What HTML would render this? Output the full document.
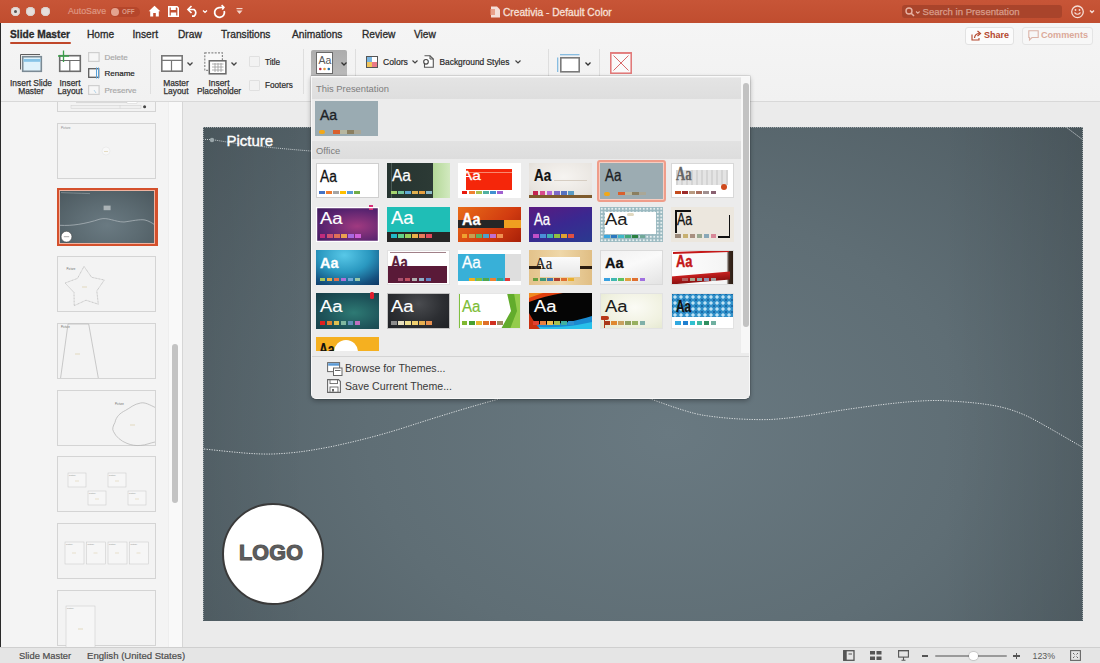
<!DOCTYPE html><html><head><meta charset="utf-8"><style>
*{margin:0;padding:0;box-sizing:border-box}
html,body{width:1100px;height:663px;overflow:hidden;background:#ebebeb;font-family:"Liberation Sans",sans-serif;position:relative}
.a{position:absolute}
.t{position:absolute;white-space:nowrap;line-height:1}
svg{position:absolute;overflow:visible}
#title{left:0;top:0;width:1100px;height:23px;background:linear-gradient(#c75537,#c04d2f)}
.tl{position:absolute;top:6.5px;width:9px;height:9px;border-radius:50%;background:#e6dfdc;box-shadow:inset 0 0 0 1px #d9cfcb}
#ribbon{left:0;top:23px;width:1100px;height:78px;background:linear-gradient(#f5f5f5,#f1f1f1)}
#ribline{left:0;top:101px;width:1100px;height:1px;background:#d8d8d8}
.tab{position:absolute;top:30.3px;font-size:10.2px;color:#2a2a2a;-webkit-text-stroke:0.3px #2a2a2a;line-height:1;white-space:nowrap}
.rl{position:absolute;font-size:8.4px;color:#333;-webkit-text-stroke:0.25px #333;line-height:8.7px;text-align:center;white-space:nowrap}
.sm{position:absolute;font-size:8px;color:#333;-webkit-text-stroke:0.2px currentColor;line-height:1;white-space:nowrap}
.sep{position:absolute;width:1px;background:#dedede}
#left{left:1px;top:102px;width:182px;height:545px;background:#f4f4f4}
.thumb{position:absolute;left:57px;width:99px;height:56px;background:#f3f3f3;border:1px solid #d4d4d4;overflow:hidden}
#slide{left:203px;top:127px;width:880px;height:494px;overflow:hidden;background:linear-gradient(90deg,rgba(0,0,0,.05) 0,rgba(0,0,0,0) 12%,rgba(0,0,0,0) 84%,rgba(0,0,0,.09) 100%),radial-gradient(ellipse 76% 100% at 53% 62%,#697981 0%,#5f6e75 45%,#4b585e 100%)}
#status{left:0;top:647px;width:1100px;height:16px;background:#e5e5e5;border-top:1px solid #cfcfcf}
#dd{left:311px;top:76px;width:439px;height:323px;background:#ececec;border:1.5px solid #f8f8f8;border-top:1px solid #fafafa;border-radius:0 0 5px 5px;box-shadow:0 0 0 0.5px rgba(0,0,0,.18),0 2px 5px rgba(0,0,0,.3);overflow:hidden}
.th{position:absolute;width:63px;height:35.7px;overflow:hidden}
.th>.bd{position:absolute;left:0;top:0;right:0;bottom:0;z-index:5}
.aa{position:absolute;font-size:15.5px;line-height:1;white-space:nowrap;transform:scaleX(.86);transform-origin:0 0;-webkit-text-stroke:0.3px currentColor}
.sw{position:absolute;height:3.5px;width:6px}
</style></head><body>
<div id="title" class="a">
<div class="tl" style="left:10.5px"></div>
<div class="tl" style="left:25.5px"></div>
<div class="tl" style="left:40.5px"></div>
<div class="a" style="left:13.5px;top:9.5px;width:3px;height:3px;border-radius:50%;background:#555"></div>
<div class="t" style="left:68px;top:6.8px;font-size:8.8px;color:#df9883;-webkit-text-stroke:0.2px #df9883">AutoSave</div>
<div class="a" style="left:110px;top:6.5px;width:30px;height:10px;border-radius:5px;background:#b5462b"></div>
<div class="a" style="left:111px;top:7.5px;width:8px;height:8px;border-radius:50%;background:#e3a38f"></div>
<div class="t" style="left:122px;top:8.5px;font-size:6.3px;font-weight:bold;color:#dc9a86">OFF</div>
<svg style="left:148px;top:5px" width="13" height="12" viewBox="0 0 13 12"><path d="M6.5 0.8 L12.3 6.2 L10.8 6.2 L10.8 11.5 L7.8 11.5 L7.8 8 L5.2 8 L5.2 11.5 L2.2 11.5 L2.2 6.2 L0.7 6.2 Z" fill="#fff"/></svg>
<svg style="left:168px;top:5.5px" width="11" height="11" viewBox="0 0 11 11"><path d="M0.8 0.8 H9 L10.2 2 V10.2 H0.8 Z" fill="none" stroke="#fff" stroke-width="1.6"/><rect x="2.8" y="1" width="5" height="3" fill="#fff"/><rect x="2.8" y="6.5" width="5.4" height="3.5" fill="#fff"/></svg>
<svg style="left:187px;top:5px" width="22" height="12" viewBox="0 0 22 12"><path d="M1.5 4.5 H7 A4 4 0 0 1 7 11.2 H5" fill="none" stroke="#fff" stroke-width="1.7"/><path d="M4.5 1 L1 4.5 L4.5 8" fill="none" stroke="#fff" stroke-width="1.7"/><path d="M16 5.5 L18 7.5 L20 5.5" fill="none" stroke="#fff" stroke-width="1.2"/></svg>
<svg style="left:213px;top:4.5px" width="14" height="13" viewBox="0 0 14 13"><path d="M11.2 6 A4.9 4.9 0 1 1 6 2.6" fill="none" stroke="#fff" stroke-width="1.8"/><path d="M5.8 2.6 L10.8 2.3 M8.6 0.2 L10.9 2.3 L9.3 4.6" fill="none" stroke="#fff" stroke-width="1.6"/></svg>
<svg style="left:236px;top:8px" width="7" height="7" viewBox="0 0 7 7"><rect x="0.5" y="0" width="6" height="1.2" fill="#f3d3c9"/><path d="M0.5 2.5 H6.5 L3.5 6 Z" fill="#f3d3c9"/></svg>
<svg style="left:489.5px;top:5.5px" width="11" height="12" viewBox="0 0 11 12"><path d="M1 0.5 H7 L10 3.5 V11.5 H1 Z" fill="#f4ded8"/><path d="M0.5 3 H5 V9 H0.5 Z" fill="#e8a08a"/></svg>
<div class="t" style="left:503px;top:8.1px;font-size:10.2px;color:#f7e0d9;-webkit-text-stroke:0.3px #f7e0d9">Creativia - Default Color</div>
<div class="a" style="left:902px;top:4.5px;width:159.5px;height:13.5px;border-radius:3px;background:#a9442b"></div>
<svg style="left:905px;top:6.5px" width="16" height="10" viewBox="0 0 16 10"><circle cx="4" cy="4" r="3" fill="none" stroke="#e7b2a3" stroke-width="1.4"/><path d="M6.2 6.2 L9 9" stroke="#e7b2a3" stroke-width="1.6"/><path d="M11 4.5 L12.8 6.3 L14.6 4.5" fill="none" stroke="#e7b2a3" stroke-width="1.1"/></svg>
<div class="t" style="left:922.5px;top:6.8px;font-size:9.6px;color:#d89d8b;-webkit-text-stroke:0.25px #d89d8b">Search in Presentation</div>
<svg style="left:1071px;top:4.5px" width="24" height="14" viewBox="0 0 24 14"><circle cx="6.5" cy="6.8" r="5.8" fill="none" stroke="#f5dcd4" stroke-width="1.3"/><circle cx="4.5" cy="5" r="0.9" fill="#f5dcd4"/><circle cx="8.5" cy="5" r="0.9" fill="#f5dcd4"/><path d="M3.5 7.5 Q6.5 11 9.5 7.5" fill="none" stroke="#f5dcd4" stroke-width="1.2"/><path d="M19 5.5 L21 7.5 L23 5.5" fill="none" stroke="#f5dcd4" stroke-width="1.4"/></svg>
</div>
<div id="ribbon" class="a"></div><div id="ribline" class="a"></div>
<div class="tab" style="left:10px;font-weight:bold;">Slide Master</div>
<div class="tab" style="left:87px;">Home</div>
<div class="tab" style="left:132.5px;">Insert</div>
<div class="tab" style="left:178px;">Draw</div>
<div class="tab" style="left:221px;">Transitions</div>
<div class="tab" style="left:292px;">Animations</div>
<div class="tab" style="left:362px;">Review</div>
<div class="tab" style="left:414px;">View</div>
<div class="a" style="left:9.5px;top:42px;width:61px;height:2.2px;background:#c0472a;border-radius:1px"></div>
<div class="a" style="left:965px;top:26.5px;width:48.5px;height:18px;background:#fbfbfb;border:1px solid #e2e2e2;border-radius:3px"></div>
<svg style="left:970.5px;top:30px" width="11" height="11" viewBox="0 0 11 11"><path d="M1 4.5 V10 H8 V8" fill="none" stroke="#b4472d" stroke-width="1.1"/><path d="M3.5 8 Q4 3.5 8.5 3.5" fill="none" stroke="#b4472d" stroke-width="1.2"/><path d="M6.5 1 L9.5 3.5 L6.5 6" fill="none" stroke="#b4472d" stroke-width="1.2"/></svg>
<div class="t" style="left:984px;top:31px;font-size:9px;font-weight:bold;color:#b4472d">Share</div>
<div class="a" style="left:1022px;top:26.5px;width:71px;height:18px;background:#f7f7f7;border:1px solid #e4e4e4;border-radius:3px"></div>
<svg style="left:1027.5px;top:30px" width="11" height="11" viewBox="0 0 11 11"><path d="M0.8 0.8 H10.2 V7.5 H4 L1.5 10 V7.5 H0.8 Z" fill="none" stroke="#dcb4a8" stroke-width="1.1"/></svg>
<div class="t" style="left:1041px;top:31px;font-size:9.1px;font-weight:bold;color:#dba999">Comments</div>
<svg style="left:20px;top:54px" width="23" height="19" viewBox="0 0 23 19"><path d="M0.5 15.5 V0.5 H20" fill="none" stroke="#5e5e5e" stroke-width="1"/><rect x="2.7" y="2.7" width="18.6" height="14.6" fill="#dff2fb" stroke="#7b8a94" stroke-width="1.6"/><rect x="3.5" y="5" width="17" height="2.8" fill="#86c3e6"/></svg>
<div class="rl" style="left:9.5px;top:78.5px;width:43px">Insert Slide<br>Master</div>
<svg style="left:57px;top:50px" width="25" height="23" viewBox="0 0 25 23"><rect x="2.7" y="5.7" width="20.6" height="15.6" fill="#fff" stroke="#6c6c6c" stroke-width="1.6"/><path d="M3 10.5 H23 M12.8 10.5 V21" stroke="#6c6c6c" stroke-width="1.2"/><path d="M6.5 0.5 V12 M1 6 H12" stroke="#3aa04a" stroke-width="1.3"/></svg>
<div class="rl" style="left:56px;top:78.5px;width:28px">Insert<br>Layout</div>
<svg style="left:88px;top:52px" width="12" height="10" viewBox="0 0 12 10"><rect x="0.6" y="0.6" width="10.5" height="8.8" fill="#f6f6f6" stroke="#cfcfcf" stroke-width="1.2"/></svg>
<div class="sm" style="left:104.5px;top:54.3px;color:#a8a8a8">Delete</div>
<svg style="left:88px;top:67px" width="13" height="12" viewBox="0 0 13 12"><rect x="0.7" y="1.7" width="10" height="8.6" fill="#f8f8f8" stroke="#5d5d5d" stroke-width="1.3"/><path d="M8.5 0.5 V11.5 M10.5 0.5 V11.5" stroke="#5aa0d6" stroke-width="1"/></svg>
<div class="sm" style="left:104.5px;top:70px;color:#222;font-size:8px">Rename</div>
<svg style="left:88px;top:85px" width="12" height="10" viewBox="0 0 12 10"><rect x="0.6" y="0.6" width="10.5" height="8.8" fill="#f6f6f6" stroke="#cfcfcf" stroke-width="1.2"/><path d="M6 5 L8 8" stroke="#b5d5ea" stroke-width="1"/></svg>
<div class="sm" style="left:104.5px;top:86.5px;color:#a8a8a8">Preserve</div>
<div class="sep" style="left:150px;top:49px;height:45px"></div>
<svg style="left:161px;top:55px" width="22" height="17" viewBox="0 0 22 17"><rect x="0.8" y="0.8" width="20.4" height="15.4" fill="#fff" stroke="#777" stroke-width="1.6"/><path d="M1 5.3 H21 M10.5 5.3 V16" stroke="#777" stroke-width="1.2"/></svg>
<svg style="left:187px;top:62px" width="6" height="4" viewBox="0 0 6 4"><path d="M0.5 0.5 L3 3 L5.5 0.5" fill="none" stroke="#444" stroke-width="1.3"/></svg>
<div class="rl" style="left:158px;top:78.5px;width:36px">Master<br>Layout</div>
<svg style="left:204px;top:52px" width="23" height="23" viewBox="0 0 23 23"><rect x="0.8" y="0.8" width="17.6" height="17.6" fill="#f8f8f8" stroke="#8a8a8a" stroke-width="1.2" stroke-dasharray="2 1.3"/><rect x="5.3" y="8.8" width="16.6" height="13" fill="#fff" stroke="#666" stroke-width="1.5"/><path d="M8 12 H19.5 M8 15 H19.5 M8 18 H19.5 M11 11 V20 M14 11 V20 M17 11 V20" stroke="#999" stroke-width="0.8"/></svg>
<svg style="left:231px;top:62px" width="6" height="4" viewBox="0 0 6 4"><path d="M0.5 0.5 L3 3 L5.5 0.5" fill="none" stroke="#444" stroke-width="1.3"/></svg>
<div class="rl" style="left:195px;top:78.5px;width:48px">Insert<br>Placeholder</div>
<div class="a" style="left:249px;top:56px;width:10.5px;height:10.5px;border:1px solid #e0e0e0;background:#f2f2f2;border-radius:1px"></div>
<div class="sm" style="left:265px;top:59px;color:#2a2a2a;font-size:8.2px">Title</div>
<div class="a" style="left:249px;top:80px;width:10.5px;height:10.5px;border:1px solid #e0e0e0;background:#f2f2f2;border-radius:1px"></div>
<div class="sm" style="left:265px;top:82.2px;color:#2a2a2a;font-size:8.2px">Footers</div>
<div class="sep" style="left:303px;top:49px;height:45px"></div>
<div class="a" style="left:311px;top:50px;width:35.5px;height:26px;background:linear-gradient(#acacac,#bababa);border-radius:2px 2px 0 0"></div>
<svg style="left:316px;top:52px" width="17" height="22" viewBox="0 0 17 22"><rect x="0.5" y="0.5" width="16" height="21" fill="#fff" stroke="#6a6a6a" stroke-width="1"/><text x="2.6" y="12.3" font-family="Liberation Sans" font-size="10.5" fill="#555">Aa</text><circle cx="4.3" cy="17" r="1.3" fill="#c0283c"/><circle cx="8.5" cy="17" r="1.3" fill="#e19a3a"/><circle cx="12.8" cy="17" r="1.3" fill="#1f6fa8"/></svg>
<svg style="left:340.5px;top:62px" width="6" height="4" viewBox="0 0 6 4"><path d="M0.5 0.5 L3 3 L5.5 0.5" fill="none" stroke="#333" stroke-width="1.3"/></svg>
<div class="sep" style="left:355px;top:49px;height:45px"></div>
<svg style="left:366px;top:55.5px" width="12" height="12" viewBox="0 0 12 12"><rect x="0.5" y="0.5" width="5.5" height="5.5" fill="#79b5e1"/><rect x="6" y="0.5" width="5.5" height="5.5" fill="#fff"/><rect x="0.5" y="6" width="5.5" height="5.5" fill="#f1c55a"/><rect x="6" y="6" width="5.5" height="5.5" fill="#ea7a88"/><rect x="0.5" y="0.5" width="11" height="11" fill="none" stroke="#555" stroke-width="1"/></svg>
<div class="sm" style="left:383px;top:57.5px;color:#2a2a2a;font-size:8.6px">Colors</div>
<svg style="left:411.5px;top:60px" width="6" height="4" viewBox="0 0 6 4"><path d="M0.5 0.5 L3 3 L5.5 0.5" fill="none" stroke="#444" stroke-width="1.2"/></svg>
<svg style="left:423px;top:55px" width="12" height="13" viewBox="0 0 12 13"><path d="M1.5 0.8 H7 L10.3 4 V12.2 H1.5 V9" fill="#fdfdfd" stroke="#555" stroke-width="1.1"/><path d="M7 0.8 V4 H10.3" fill="none" stroke="#555" stroke-width="1"/><circle cx="3" cy="6.8" r="2.3" fill="#fff" stroke="#444" stroke-width="1.1"/></svg>
<div class="sm" style="left:439.5px;top:57.5px;color:#2a2a2a;font-size:8.4px">Background Styles</div>
<svg style="left:514.5px;top:60px" width="6" height="4" viewBox="0 0 6 4"><path d="M0.5 0.5 L3 3 L5.5 0.5" fill="none" stroke="#444" stroke-width="1.2"/></svg>
<div class="sep" style="left:548px;top:49px;height:45px"></div>
<svg style="left:557px;top:53.5px" width="24" height="19" viewBox="0 0 24 19"><path d="M3 0.7 H22.5" stroke="#7db7df" stroke-width="1.2"/><path d="M0.7 3.5 V18" stroke="#7db7df" stroke-width="1.2"/><rect x="3.8" y="3.8" width="18.4" height="14" fill="#fff" stroke="#7a7a7a" stroke-width="1.6"/></svg>
<svg style="left:584.5px;top:62px" width="6" height="4" viewBox="0 0 6 4"><path d="M0.5 0.5 L3 3 L5.5 0.5" fill="none" stroke="#333" stroke-width="1.3"/></svg>
<div class="sep" style="left:598.5px;top:49px;height:45px"></div>
<svg style="left:610px;top:52px" width="22" height="22" viewBox="0 0 22 22"><rect x="0.8" y="0.8" width="20.4" height="20.4" fill="#fafafa" stroke="#e07474" stroke-width="1.5"/><path d="M1 1.2 H21" stroke="#e48080" stroke-width="1.5"/><path d="M3.5 3.5 L18.5 18.5 M18.5 3.5 L3.5 18.5" stroke="#d86a6a" stroke-width="1"/></svg>
<div id="left" class="a"></div>
<div class="a" style="left:0;top:23px;width:1px;height:624px;background:#2a2a2a"></div>
<div class="a" style="left:168px;top:102px;width:14px;height:545px;background:#f9f9f9;border-left:1px solid #eeeeee"></div>
<div class="a" style="left:182px;top:102px;width:1px;height:545px;background:#d6d6d6"></div>
<div class="a" style="left:171.5px;top:343.5px;width:6px;height:159px;background:#c3c3c3;border-radius:3px"></div>
<div class="a" style="left:0;top:102px;width:168px;height:545px;overflow:hidden"><div class="a" style="left:0;top:-102px;width:168px;height:700px">
<div class="thumb" style="top:56.1px"></div>
<div class="thumb" style="top:122.8px"></div>
<div class="a" style="left:56.6px;top:187.7px;width:101px;height:58.5px;background:#d4502c"></div>
<div class="a" style="left:59.2px;top:190.2px;width:95.8px;height:53.5px;background:#efb3a0"></div>
<div class="a" style="left:60.2px;top:190.9px;width:93.8px;height:52px;background:radial-gradient(ellipse 75% 90% at 50% 66%,#6a7a82,#5d6c73 45%,#4b585e)"></div>
<svg style="left:60.2px;top:190.9px" width="94" height="52" viewBox="0 0 94 52"><path d="M1 1.6 Q12 2 30 2.6" fill="none" stroke="#9aa6ab" stroke-width="0.6"/><path d="M0 34.3 C12 35 25 33 40 28.1 C48 26 55 31 64 31 C72 30 80 28 85 29 C89 30 92 32 94 33.3" fill="none" stroke="#a9b3b7" stroke-width="0.8"/><rect x="43.6" y="14.6" width="7" height="4.6" fill="#aab2b5"/><circle cx="6.5" cy="45.7" r="5.4" fill="#fff" stroke="#3a3a3a" stroke-width="0.5"/><rect x="3.8" y="45.2" width="5.4" height="1" fill="#aaa"/></svg>
<div class="thumb" style="top:256.2px"></div>
<div class="thumb" style="top:322.9px"></div>
<div class="thumb" style="top:389.6px"></div>
<div class="thumb" style="top:456.3px"></div>
<div class="thumb" style="top:523.0px"></div>
<div class="thumb" style="top:589.7px"></div>
<svg style="left:58px;top:57.1px" width="97" height="54" viewBox="0 0 97 54"><path d="M18 45.6 H79" stroke="#c4c4c4" stroke-width="0.6"/><rect x="69" y="44.6" width="10" height="2" fill="#fff" stroke="#c8c8c8" stroke-width="0.4"/><rect x="13" y="48.3" width="70" height="3" fill="#f0f0f0" stroke="#cdcdcd" stroke-width="0.5"/><path d="M62 48.3 V51.3" stroke="#cdcdcd" stroke-width="0.5"/><circle cx="86.6" cy="49.8" r="1.5" fill="#444"/></svg>
<svg style="left:58px;top:123.8px" width="97" height="54" viewBox="0 0 97 54"><text x="3" y="5" font-size="3" fill="#888" font-family="Liberation Sans">Picture</text><circle cx="48" cy="27" r="4" fill="#f8f8f8" stroke="#ddd" stroke-width="0.4"/><path d="M46 27.5 H50" stroke="#d9c9a0" stroke-width="0.6"/></svg>
<svg style="left:58px;top:257.2px" width="97" height="54" viewBox="0 0 97 54"><text x="8.6" y="13" font-size="2.8" fill="#666" font-family="Liberation Sans">Picture</text><path d="M26.0 9.4 L33.6 20.3 L46.3 23.0 L38.8 33.9 L40.3 47.2 L28.0 43.2 L16.2 48.7 L16.0 35.5 L7.1 26.0 L19.5 21.4 Z" fill="none" stroke="#b0b0b0" stroke-width="0.7" stroke-dasharray="1 0.5"/><path d="M24 30 H29" stroke="#d9c9a0" stroke-width="0.6"/></svg>
<svg style="left:58px;top:323.9px" width="97" height="54" viewBox="0 0 97 54"><text x="3" y="4" font-size="2.8" fill="#666" font-family="Liberation Sans">Picture</text><path d="M10 0 H30.7 M10 0 L2.6 54 M30.7 0 L40.3 54" fill="none" stroke="#b4b4b4" stroke-width="0.7"/><path d="M17 30 H22" stroke="#d9c9a0" stroke-width="0.6"/></svg>
<svg style="left:58px;top:390.6px" width="97" height="54" viewBox="0 0 97 54"><text x="57" y="14" font-size="2.8" fill="#666" font-family="Liberation Sans">Picture</text><path d="M97 16.4 C92 14 87 11 82.6 12 C76 13 72 17 67.5 19.4 C62 22 58 26 57 31.4 C55 35 54 38 55.4 40.4 C58 46 63 50 69 52.4 C73 54 78 55 82.6 54.4 C88 54 92 52 97 51" fill="none" stroke="#b0b0b0" stroke-width="0.7"/><path d="M72 34 H77" stroke="#d9c9a0" stroke-width="0.6"/></svg>
<svg style="left:58px;top:457.3px" width="97" height="54" viewBox="0 0 97 54"><rect x="10" y="16" width="18" height="14" fill="#f6f6f6" stroke="#c6c6c6" stroke-width="0.5"/><text x="11" y="18.5" font-size="2.2" fill="#888" font-family="Liberation Sans">Picture</text><path d="M17 24 H21" stroke="#d9c9a0" stroke-width="0.5"/><rect x="50" y="16" width="18" height="14" fill="#f6f6f6" stroke="#c6c6c6" stroke-width="0.5"/><text x="51" y="18.5" font-size="2.2" fill="#888" font-family="Liberation Sans">Picture</text><path d="M57 24 H61" stroke="#d9c9a0" stroke-width="0.5"/><rect x="30" y="34" width="18" height="14" fill="#f6f6f6" stroke="#c6c6c6" stroke-width="0.5"/><text x="31" y="36.5" font-size="2.2" fill="#888" font-family="Liberation Sans">Picture</text><path d="M37 42 H41" stroke="#d9c9a0" stroke-width="0.5"/><rect x="70" y="34" width="18" height="14" fill="#f6f6f6" stroke="#c6c6c6" stroke-width="0.5"/><text x="71" y="36.5" font-size="2.2" fill="#888" font-family="Liberation Sans">Picture</text><path d="M77 42 H81" stroke="#d9c9a0" stroke-width="0.5"/></svg>
<svg style="left:58px;top:524.0px" width="97" height="54" viewBox="0 0 97 54"><rect x="7" y="18" width="19" height="22" fill="#f6f6f6" stroke="#c6c6c6" stroke-width="0.5"/><text x="8" y="20.5" font-size="2.2" fill="#888" font-family="Liberation Sans">Picture</text><path d="M14 29 H18" stroke="#d9c9a0" stroke-width="0.5"/><rect x="28.5" y="18" width="19" height="22" fill="#f6f6f6" stroke="#c6c6c6" stroke-width="0.5"/><text x="29.5" y="20.5" font-size="2.2" fill="#888" font-family="Liberation Sans">Picture</text><path d="M35.5 29 H39.5" stroke="#d9c9a0" stroke-width="0.5"/><rect x="50" y="18" width="19" height="22" fill="#f6f6f6" stroke="#c6c6c6" stroke-width="0.5"/><text x="51" y="20.5" font-size="2.2" fill="#888" font-family="Liberation Sans">Picture</text><path d="M57 29 H61" stroke="#d9c9a0" stroke-width="0.5"/><rect x="71.5" y="18" width="19" height="22" fill="#f6f6f6" stroke="#c6c6c6" stroke-width="0.5"/><text x="72.5" y="20.5" font-size="2.2" fill="#888" font-family="Liberation Sans">Picture</text><path d="M78.5 29 H82.5" stroke="#d9c9a0" stroke-width="0.5"/></svg>
<svg style="left:58px;top:590.7px" width="97" height="54" viewBox="0 0 97 54"><rect x="8" y="15" width="29" height="50" fill="#f6f6f6" stroke="#c6c6c6" stroke-width="0.5"/><text x="9" y="18" font-size="2.2" fill="#888" font-family="Liberation Sans">Picture</text><path d="M20 38 H25" stroke="#d9c9a0" stroke-width="0.6"/></svg>
</div></div>
<div id="slide" class="a">
<svg style="left:0;top:0" width="880" height="494" viewBox="0 0 880 494"><path d="M0 12.4 L9 12.6 C30 16 50 19.5 108 24 L130 25.5" fill="none" stroke="#d0d6d8" stroke-width="0.9" stroke-dasharray="1 1"/><circle cx="9" cy="13" r="2.2" fill="#9aa6aa"/><path d="M1 322 C30 325 50 327.5 70 327 C95 326 110 323 128 319.7 C150 315 175 309 200.6 300.8 C240 288 270 279 297 271.7 C340 258 400 255 450 272.8 C470 280 490 287 502 288.5 C525 292 550 293 568 292.5 C590 291 610 288 633 284 C680 277 720 272 745 273.9 C765 275 780 276.5 793 279 C810 282.2 825 289 835 294.8 C850 303 865 312 879 320" fill="none" stroke="#d5dadc" stroke-width="1" stroke-dasharray="1.3 1.2"/><path d="M863.6 0.5 L879.6 12.6" fill="none" stroke="#d5dadc" stroke-width="1" stroke-dasharray="1.3 1.2"/><path d="M0.5 0 V494 M0 0.5 H880 M879.5 0 V494" fill="none" stroke="#aeb6b9" stroke-width="0.8" stroke-dasharray="1 1"/></svg>
<div class="t" style="left:23.5px;top:6px;font-size:15px;color:#fff;-webkit-text-stroke:0.35px #fff">Picture</div>
<div class="a" style="left:18.5px;top:375.5px;width:102px;height:102px;border-radius:50%;background:#fff;border:2px solid #3a3a3a"></div>
<div class="t" style="left:36px;top:416px;font-size:21.5px;font-weight:bold;color:#5e5e5e;-webkit-text-stroke:1.1px #555;letter-spacing:0.2px">LOGO</div>
</div>
<div id="status" class="a">
<div class="t" style="left:19px;top:3px;font-size:9.4px;color:#4d4d4d;-webkit-text-stroke:0.2px #4d4d4d">Slide Master</div>
<div class="t" style="left:87px;top:3px;font-size:9.6px;color:#4d4d4d;-webkit-text-stroke:0.2px #4d4d4d">English (United States)</div>
</div>
<svg style="left:843px;top:650px" width="12" height="11" viewBox="0 0 12 11"><rect x="0.7" y="0.7" width="10.3" height="9.6" fill="none" stroke="#555" stroke-width="1.3"/><rect x="0.7" y="0.7" width="3" height="9.6" fill="#555"/><path d="M5.5 4 H9" stroke="#555" stroke-width="1"/></svg>
<svg style="left:870px;top:651px" width="12" height="10" viewBox="0 0 12 10"><rect x="0" y="0" width="5" height="3.5" fill="#555"/><rect x="6.5" y="0" width="5" height="3.5" fill="#555"/><rect x="0" y="5.5" width="5" height="3.5" fill="#555"/><rect x="6.5" y="5.5" width="5" height="3.5" fill="#555"/></svg>
<svg style="left:897.5px;top:650px" width="11" height="11" viewBox="0 0 11 11"><rect x="0.6" y="0.6" width="9.8" height="6.5" fill="none" stroke="#555" stroke-width="1.1"/><path d="M0 0.6 H11 M5.5 7 V10 M3.5 10.3 H7.5" stroke="#555" stroke-width="1.1"/></svg>
<div class="a" style="left:922px;top:655px;width:6px;height:1.5px;background:#555"></div>
<div class="a" style="left:934.5px;top:654.5px;width:72.5px;height:2.5px;background:#9a9a9a;border-radius:1px"></div>
<div class="a" style="left:969px;top:651.5px;width:8.5px;height:8.5px;border-radius:50%;background:#fff;box-shadow:0 0 1px 0.5px rgba(0,0,0,.25)"></div>
<div class="a" style="left:1013px;top:655px;width:6.5px;height:1.5px;background:#555"></div><div class="a" style="left:1015.5px;top:652.5px;width:1.5px;height:6.5px;background:#555"></div>
<div class="t" style="left:1032.5px;top:651.5px;font-size:8.8px;color:#5a5a5a">123%</div>
<svg style="left:1070px;top:650px" width="11" height="11" viewBox="0 0 11 11"><rect x="0.6" y="0.6" width="9.8" height="9.8" fill="none" stroke="#666" stroke-width="1.1"/><path d="M3 3 L4.5 4.5 M8 3 L6.5 4.5 M3 8 L4.5 6.5 M8 8 L6.5 6.5" stroke="#666" stroke-width="1"/></svg>
<div id="dd" class="a">
<div class="a" style="left:0;top:1px;width:429px;height:21px;background:linear-gradient(#e4e4e4,#dedede)"></div>
<div class="t" style="left:4px;top:7px;font-size:9.4px;color:#7d7d7d">This Presentation</div>
<div class="a" style="left:0;top:64px;width:429px;height:18px;background:linear-gradient(#e2e2e2,#dddddd)"></div>
<div class="t" style="left:4px;top:68.8px;font-size:9.4px;color:#7d7d7d">Office</div>
<div class="a" style="left:429px;top:0;width:9px;height:276px;background:#f7f7f7"></div>
<div class="a" style="left:430.5px;top:6px;width:6px;height:244px;background:#c2c2c2;border-radius:3px"></div>
<div class="a" style="left:0;top:279px;width:438px;height:1px;background:#d4d4d4"></div>
<svg style="left:15px;top:285px" width="16" height="14" viewBox="0 0 16 14"><rect x="0.6" y="0.6" width="12" height="9" fill="#fff" stroke="#666" stroke-width="1"/><rect x="1.2" y="1.2" width="10.8" height="2.5" fill="#5a9ad6"/><rect x="6.5" y="6" width="8.5" height="7.5" fill="#fff" stroke="#666" stroke-width="1"/><path d="M8 8.5 H13.5" stroke="#666" stroke-width="1"/></svg>
<div class="t" style="left:33px;top:286px;font-size:10.6px;color:#3a3a3a">Browse for Themes...</div>
<svg style="left:15px;top:302px" width="15" height="14" viewBox="0 0 15 14"><path d="M0.6 0.6 H11.5 L13.4 2.5 V13.4 H0.6 Z" fill="#fff" stroke="#666" stroke-width="1.1"/><rect x="3" y="0.6" width="7.5" height="4" fill="none" stroke="#666" stroke-width="0.9"/><rect x="3" y="8" width="8" height="5.4" fill="none" stroke="#666" stroke-width="0.9"/><rect x="5" y="10" width="2" height="2.5" fill="#666"/></svg>
<div class="t" style="left:33px;top:304px;font-size:10.6px;color:#3a3a3a">Save Current Theme...</div>
</div>
<div class="th" style="left:315px;top:101px;width:63.4px;height:35.4px;background:#9aabb2;"><div class="aa" style="left:5.00px;top:6.51px;color:#1d2226;font-size:14.29px;transform:scaleX(0.984);font-family:'Liberation Sans',sans-serif;font-weight:normal;-webkit-text-stroke:0.35px #1d2226;">Aa</div><div class="a" style="left:4.3px;top:28.8px;width:6px;height:4.2px;border-radius:2px;background:#f2a818"></div><div class="sw" style="left:18.00px;top:29.2px;width:6.5px;height:3.4px;background:#d9602d"></div><div class="sw" style="left:25.00px;top:29.2px;width:6.5px;height:3.4px;background:#b7b7a0"></div><div class="sw" style="left:32.00px;top:29.2px;width:6.5px;height:3.4px;background:#8b7f60"></div><div class="sw" style="left:39.00px;top:29.2px;width:6.5px;height:3.4px;background:#a9a797"></div></div>
<div class="a" style="left:596.5px;top:159.5px;width:69.5px;height:42px;border:2px solid #ef9d8a;background:#f6cdc1;border-radius:3px"></div>
<div class="th" style="left:315.7px;top:162.7px;width:63px;height:35.6px;background:#fff;"><div class="aa" style="left:4.50px;top:5.82px;color:#111;font-size:15.57px;transform:scaleX(0.886);font-family:'Liberation Sans',sans-serif;font-weight:normal;-webkit-text-stroke:0.3px #111;">Aa</div><div class="sw" style="left:3.50px;top:28.3px;width:5.6px;height:3.4px;background:#4472c4"></div><div class="sw" style="left:10.55px;top:28.3px;width:5.6px;height:3.4px;background:#ed7d31"></div><div class="sw" style="left:17.60px;top:28.3px;width:5.6px;height:3.4px;background:#a5a5a5"></div><div class="sw" style="left:24.65px;top:28.3px;width:5.6px;height:3.4px;background:#ffc000"></div><div class="sw" style="left:31.70px;top:28.3px;width:5.6px;height:3.4px;background:#5b9bd5"></div><div class="sw" style="left:38.75px;top:28.3px;width:5.6px;height:3.4px;background:#70ad47"></div><div class="bd" style="box-shadow:inset 0 0 0 1px #cfcfcf"></div></div>
<div class="th" style="left:386.6px;top:162.7px;width:63px;height:35.6px;background:linear-gradient(90deg,#263430 0,#2c3a35 73%,#b4d898 73%,#d2e9bf 100%);"><div class="a" style="left:4px;top:0;width:0.8px;height:36px;background:#4a5a54"></div><div class="aa" style="left:5.30px;top:4.39px;color:#fff;font-size:16.43px;transform:scaleX(0.944);font-family:'Liberation Sans',sans-serif;font-weight:normal;-webkit-text-stroke:0.25px #fff;">Aa</div><div class="sw" style="left:4.40px;top:28.3px;width:5.6px;height:3.4px;background:#a5d36e"></div><div class="sw" style="left:11.45px;top:28.3px;width:5.6px;height:3.4px;background:#72c49a"></div><div class="sw" style="left:18.50px;top:28.3px;width:5.6px;height:3.4px;background:#5fa8d3"></div><div class="sw" style="left:25.55px;top:28.3px;width:5.6px;height:3.4px;background:#e0b050"></div><div class="sw" style="left:32.60px;top:28.3px;width:5.6px;height:3.4px;background:#e8a040"></div><div class="sw" style="left:39.65px;top:28.3px;width:5.6px;height:3.4px;background:#8ab8c8"></div></div>
<div class="th" style="left:457.9px;top:162.7px;width:63px;height:35.6px;background:#fff;"><div class="a" style="left:8.1px;top:6.2px;width:45.9px;height:21.4px;background:#f5260a"></div><div class="a" style="left:8.1px;top:9.8px;width:45.9px;height:1px;background:#f9886f"></div><div class="aa" style="left:4.10px;top:7.42px;color:#fff;font-size:12.86px;transform:scaleX(1.192);font-family:'Liberation Sans',sans-serif;font-weight:normal;-webkit-text-stroke:0.3px #fff;">Aa</div><div class="sw" style="left:4.00px;top:28.3px;width:5.6px;height:3.4px;background:#e8180c"></div><div class="sw" style="left:11.05px;top:28.3px;width:5.6px;height:3.4px;background:#f08030"></div><div class="sw" style="left:18.10px;top:28.3px;width:5.6px;height:3.4px;background:#a8c050"></div><div class="sw" style="left:25.15px;top:28.3px;width:5.6px;height:3.4px;background:#50b0a0"></div><div class="sw" style="left:32.20px;top:28.3px;width:5.6px;height:3.4px;background:#4090d0"></div><div class="sw" style="left:39.25px;top:28.3px;width:5.6px;height:3.4px;background:#a060d0"></div></div>
<div class="th" style="left:528.6px;top:162.7px;width:63px;height:35.6px;background:radial-gradient(ellipse at 55% 40%,#f6f4f1,#e9e5e0 70%,#dcd7d0);"><div class="a" style="left:25px;top:17.8px;width:33px;height:0.8px;background:#d6cdc2"></div><div class="aa" style="left:5.30px;top:4.59px;color:#111;font-size:16.43px;transform:scaleX(0.819);font-family:'Liberation Sans',sans-serif;font-weight:bold;-webkit-text-stroke:0.2px #111;">Aa</div><div class="sw" style="left:4.20px;top:28.6px;width:5.6px;height:3.4px;background:#c4224f"></div><div class="sw" style="left:11.25px;top:28.6px;width:5.6px;height:3.4px;background:#d84b8e"></div><div class="sw" style="left:18.30px;top:28.6px;width:5.6px;height:3.4px;background:#b56ad8"></div><div class="sw" style="left:25.35px;top:28.6px;width:5.6px;height:3.4px;background:#7d6bc9"></div><div class="sw" style="left:32.40px;top:28.6px;width:5.6px;height:3.4px;background:#5773c0"></div><div class="sw" style="left:39.45px;top:28.6px;width:5.6px;height:3.4px;background:#5a9cc4"></div><div class="a" style="left:0;top:32.2px;width:63px;height:3.4px;background:#7e5a2c"></div></div>
<div class="th" style="left:599.8px;top:163px;width:63px;height:35.5px;background:#9cacb2;"><div class="aa" style="left:5.70px;top:5.08px;color:#1d2226;font-size:15.86px;transform:scaleX(0.843);font-family:'Liberation Sans',sans-serif;font-weight:normal;-webkit-text-stroke:0.35px #1d2226;">Aa</div><div class="a" style="left:4.5px;top:28.6px;width:6px;height:4.2px;border-radius:2px;background:#f2a818"></div><div class="sw" style="left:18.50px;top:28.6px;width:6.5px;height:3.4px;background:#d9602d"></div><div class="sw" style="left:25.50px;top:28.6px;width:6.5px;height:3.4px;background:#b7b7a0"></div><div class="sw" style="left:32.50px;top:28.6px;width:6.5px;height:3.4px;background:#8b7f60"></div><div class="sw" style="left:39.50px;top:28.6px;width:6.5px;height:3.4px;background:#a9a797"></div></div>
<div class="th" style="left:671.1px;top:162.7px;width:63px;height:35.6px;background:#fff;"><div class="a" style="left:5px;top:7px;width:52.4px;height:15.3px;background:repeating-linear-gradient(90deg,#d4d4d4 0 2px,#e4e4e4 2px 5px)"></div><div class="aa" style="left:4.90px;top:3.68px;color:#666;font-size:17.86px;transform:scaleX(0.716);font-family:'Liberation Serif',serif;font-weight:bold;-webkit-text-stroke:0.3px #666;">Aa</div><div class="a" style="left:49.9px;top:21.2px;width:6px;height:6px;border-radius:50%;background:#cf4a1e"></div><div class="sw" style="left:4.20px;top:28.3px;width:5.6px;height:3.4px;background:#c44c1e"></div><div class="sw" style="left:11.25px;top:28.3px;width:5.6px;height:3.4px;background:#9c2a2a"></div><div class="sw" style="left:18.30px;top:28.3px;width:5.6px;height:3.4px;background:#b89a80"></div><div class="sw" style="left:25.35px;top:28.3px;width:5.6px;height:3.4px;background:#a87060"></div><div class="sw" style="left:32.40px;top:28.3px;width:5.6px;height:3.4px;background:#a09090"></div><div class="sw" style="left:39.45px;top:28.3px;width:5.6px;height:3.4px;background:#8a6070"></div><div class="bd" style="box-shadow:inset 0 0 0 1px #d8d8d8"></div></div>
<div class="th" style="left:315.7px;top:206.6px;width:63px;height:35.6px;background:radial-gradient(ellipse at 65% 55%,#a03a80,#5a2470 60%,#3a1a5a);"><div class="bd" style="box-shadow:inset 0 0 0 1.2px #fff"></div><div class="aa" style="left:4.60px;top:3.67px;color:#fff;font-size:17.29px;transform:scaleX(1.064);font-family:'Liberation Sans',sans-serif;font-weight:normal;-webkit-text-stroke:0.15px #fff;">Aa</div><div class="sw" style="left:4.20px;top:27.9px;width:5.6px;height:3.4px;background:#c02c7c"></div><div class="sw" style="left:11.25px;top:27.9px;width:5.6px;height:3.4px;background:#d05070"></div><div class="sw" style="left:18.30px;top:27.9px;width:5.6px;height:3.4px;background:#e07058"></div><div class="sw" style="left:25.35px;top:27.9px;width:5.6px;height:3.4px;background:#eaa050"></div><div class="sw" style="left:32.40px;top:27.9px;width:5.6px;height:3.4px;background:#a868e0"></div><div class="sw" style="left:39.45px;top:27.9px;width:5.6px;height:3.4px;background:#d060d8"></div></div>
<div class="a" style="left:369.3px;top:204.5px;width:4.2px;height:5.5px;background:#d8307a"></div>
<div class="th" style="left:386.6px;top:206.6px;width:63px;height:35.6px;background:#1fbeb6;"><div class="a" style="left:0;top:25.3px;width:63px;height:11px;background:#262626"></div><div class="aa" style="left:4.90px;top:3.65px;color:#fff;font-size:17.43px;transform:scaleX(1.060);font-family:'Liberation Sans',sans-serif;font-weight:normal;-webkit-text-stroke:0.15px #fff;">Aa</div><div class="sw" style="left:4.40px;top:27.9px;width:5.6px;height:3.4px;background:#22b8c8"></div><div class="sw" style="left:11.45px;top:27.9px;width:5.6px;height:3.4px;background:#5fd08a"></div><div class="sw" style="left:18.50px;top:27.9px;width:5.6px;height:3.4px;background:#96d05a"></div><div class="sw" style="left:25.55px;top:27.9px;width:5.6px;height:3.4px;background:#e8b048"></div><div class="sw" style="left:32.60px;top:27.9px;width:5.6px;height:3.4px;background:#e87a5a"></div><div class="sw" style="left:39.65px;top:27.9px;width:5.6px;height:3.4px;background:#e04a5a"></div></div>
<div class="th" style="left:457.9px;top:206.6px;width:63px;height:35.6px;background:linear-gradient(135deg,#e86c18,#d23c10 60%,#a82008);"><div class="a" style="left:0;top:13.2px;width:45.7px;height:8.3px;background:#262626"></div><div class="a" style="left:45.7px;top:13.2px;width:17.3px;height:8.3px;background:#f0a020"></div><div class="aa" style="left:4.40px;top:4.51px;color:#fff;font-size:16.29px;transform:scaleX(0.886);font-family:'Liberation Sans',sans-serif;font-weight:bold;">Aa</div><div class="sw" style="left:4.00px;top:27.9px;width:5.6px;height:3.4px;background:#f0a030"></div><div class="sw" style="left:11.05px;top:27.9px;width:5.6px;height:3.4px;background:#c8a050"></div><div class="sw" style="left:18.10px;top:27.9px;width:5.6px;height:3.4px;background:#60b060"></div><div class="sw" style="left:25.15px;top:27.9px;width:5.6px;height:3.4px;background:#50a0c8"></div><div class="sw" style="left:32.20px;top:27.9px;width:5.6px;height:3.4px;background:#c070d0"></div><div class="sw" style="left:39.25px;top:27.9px;width:5.6px;height:3.4px;background:#f09050"></div></div>
<div class="th" style="left:528.6px;top:206.6px;width:63px;height:35.6px;background:linear-gradient(160deg,#5a1a80,#3a2890 50%,#2a3a90);"><div class="aa" style="left:5.40px;top:4.49px;color:#fff;font-size:16.43px;transform:scaleX(0.804);font-family:'Liberation Sans',sans-serif;font-weight:normal;-webkit-text-stroke:0.3px #fff;">Aa</div><div class="sw" style="left:4.40px;top:27.9px;width:5.6px;height:3.4px;background:#c050c8"></div><div class="sw" style="left:11.45px;top:27.9px;width:5.6px;height:3.4px;background:#4a90d8"></div><div class="sw" style="left:18.50px;top:27.9px;width:5.6px;height:3.4px;background:#40b0b0"></div><div class="sw" style="left:25.55px;top:27.9px;width:5.6px;height:3.4px;background:#90c040"></div><div class="sw" style="left:32.60px;top:27.9px;width:5.6px;height:3.4px;background:#e0a030"></div><div class="sw" style="left:39.65px;top:27.9px;width:5.6px;height:3.4px;background:#e05040"></div></div>
<div class="th" style="left:599.8px;top:206.6px;width:63px;height:35.6px;background:radial-gradient(circle,#e8f0f1 1.1px,transparent 1.4px) 0 0/3.5px 3.5px,#9ab9c0;"><div class="a" style="left:5.7px;top:5.6px;width:51px;height:22.3px;background:#fff"></div><div class="a" style="left:27px;top:6.5px;width:7px;height:3px;border-radius:2px;background:#e0d8c0"></div><div class="aa" style="left:5.10px;top:4.51px;color:#1a1a1a;font-size:16.29px;transform:scaleX(1.130);font-family:'Liberation Sans',sans-serif;font-weight:normal;-webkit-text-stroke:0.1px #1a1a1a;">Aa</div><div class="sw" style="left:4.50px;top:28.2px;width:5.6px;height:3.4px;background:#3aa8e0"></div><div class="sw" style="left:11.55px;top:28.2px;width:5.6px;height:3.4px;background:#2a78c0"></div><div class="sw" style="left:18.60px;top:28.2px;width:5.6px;height:3.4px;background:#40b8c8"></div><div class="sw" style="left:25.65px;top:28.2px;width:5.6px;height:3.4px;background:#40a878"></div><div class="sw" style="left:32.70px;top:28.2px;width:5.6px;height:3.4px;background:#2a8040"></div><div class="sw" style="left:39.75px;top:28.2px;width:5.6px;height:3.4px;background:#70a898"></div></div>
<div class="th" style="left:671.1px;top:206.6px;width:63px;height:35.6px;background:#ece7de;"><div class="a" style="left:3.8px;top:3.6px;width:16.5px;height:1.8px;background:#111"></div><div class="a" style="left:3.8px;top:3.6px;width:1.8px;height:22.5px;background:#111"></div><div class="a" style="left:57.6px;top:8px;width:1.8px;height:23.4px;background:#111"></div><div class="a" style="left:47px;top:29.6px;width:12.4px;height:1.8px;background:#111"></div><div class="aa" style="left:6.40px;top:4.49px;color:#111;font-size:16.43px;transform:scaleX(0.752);font-family:'Liberation Sans',sans-serif;font-weight:normal;-webkit-text-stroke:0.3px #111;">Aa</div><div class="sw" style="left:4.40px;top:27.9px;width:5.6px;height:3.4px;background:#9a8878"></div><div class="sw" style="left:11.45px;top:27.9px;width:5.6px;height:3.4px;background:#c8b070"></div><div class="sw" style="left:18.50px;top:27.9px;width:5.6px;height:3.4px;background:#a89080"></div><div class="sw" style="left:25.55px;top:27.9px;width:5.6px;height:3.4px;background:#98a890"></div><div class="sw" style="left:32.60px;top:27.9px;width:5.6px;height:3.4px;background:#88a8b8"></div><div class="sw" style="left:39.65px;top:27.9px;width:5.6px;height:3.4px;background:#d88898"></div></div>
<div class="th" style="left:315.7px;top:249.7px;width:63px;height:35.6px;background:radial-gradient(ellipse 90% 110% at 45% 15%,#58c8e8,#2a98c0 45%,#15507e 80%,#0e3560);"><div class="aa" style="left:4.60px;top:5.74px;color:#fff;font-size:15.43px;transform:scaleX(0.935);font-family:'Liberation Sans',sans-serif;font-weight:bold;">Aa</div><div class="sw" style="left:3.90px;top:28.1px;width:5.6px;height:3.4px;background:#a8c860"></div><div class="sw" style="left:10.95px;top:28.1px;width:5.6px;height:3.4px;background:#e8b048"></div><div class="sw" style="left:18.00px;top:28.1px;width:5.6px;height:3.4px;background:#e07050"></div><div class="sw" style="left:25.05px;top:28.1px;width:5.6px;height:3.4px;background:#b070d8"></div><div class="sw" style="left:32.10px;top:28.1px;width:5.6px;height:3.4px;background:#70a8d8"></div><div class="sw" style="left:39.15px;top:28.1px;width:5.6px;height:3.4px;background:#98c8a8"></div></div>
<div class="th" style="left:386.6px;top:249.7px;width:63px;height:35.6px;background:#fff;"><div class="a" style="left:3px;top:2.5px;width:56px;height:0.8px;background:#a08088"></div><div class="aa" style="left:4.40px;top:5.50px;color:#5a1a38;font-size:15.71px;transform:scaleX(0.830);font-family:'Liberation Sans',sans-serif;font-weight:bold;">Aa</div><div class="a" style="left:1.8px;top:16.3px;width:58.5px;height:17px;background:#5a1a38"></div><div class="sw" style="left:11.00px;top:28.1px;width:5.6px;height:3.4px;background:#a85070"></div><div class="sw" style="left:18.05px;top:28.1px;width:5.6px;height:3.4px;background:#c05060"></div><div class="sw" style="left:25.10px;top:28.1px;width:5.6px;height:3.4px;background:#b0b0b0"></div><div class="sw" style="left:32.15px;top:28.1px;width:5.6px;height:3.4px;background:#90b0c8"></div><div class="sw" style="left:39.20px;top:28.1px;width:5.6px;height:3.4px;background:#6080c0"></div><div class="bd" style="box-shadow:inset 0 0 0 1px #e2e2e2"></div></div>
<div class="th" style="left:457.9px;top:249.7px;width:63px;height:35.6px;background:#fff;"><div class="a" style="left:0;top:4px;width:47.6px;height:27.6px;background:#38b0d8"></div><div class="a" style="left:47.6px;top:4px;width:15.4px;height:27.6px;background:#dedede"></div><div class="aa" style="left:4.10px;top:5.50px;color:#fff;font-size:15.71px;transform:scaleX(0.976);font-family:'Liberation Sans',sans-serif;font-weight:normal;-webkit-text-stroke:0.3px #fff;">Aa</div><div class="sw" style="left:11.40px;top:28.1px;width:5.6px;height:3.4px;background:#f0b020"></div><div class="sw" style="left:18.45px;top:28.1px;width:5.6px;height:3.4px;background:#80c040"></div><div class="sw" style="left:25.50px;top:28.1px;width:5.6px;height:3.4px;background:#50a850"></div><div class="sw" style="left:32.55px;top:28.1px;width:5.6px;height:3.4px;background:#f08030"></div><div class="sw" style="left:39.60px;top:28.1px;width:5.6px;height:3.4px;background:#30a890"></div><div class="sw" style="left:46.65px;top:28.1px;width:5.6px;height:3.4px;background:#e03838"></div></div>
<div class="th" style="left:528.6px;top:249.7px;width:63px;height:35.6px;background:linear-gradient(90deg,#e3c28a,#efd7a8 50%,#e0be84);"><div class="a" style="left:11.9px;top:7.3px;width:39.5px;height:19.8px;background:linear-gradient(#fbfbfb,#e6e6e6)"></div><div class="a" style="left:0;top:16.6px;width:12.5px;height:3px;background:#2a1c10"></div><div class="a" style="left:51.4px;top:16.6px;width:11.6px;height:3px;background:#2a1c10"></div><div class="aa" style="left:6.90px;top:6.00px;color:#222;font-size:15.71px;transform:scaleX(0.938);font-family:'Liberation Serif',serif;font-weight:normal;-webkit-text-stroke:0.2px #222;">Aa</div><div class="sw" style="left:4.30px;top:28.1px;width:5.6px;height:3.4px;background:#68a040"></div><div class="sw" style="left:11.35px;top:28.1px;width:5.6px;height:3.4px;background:#409878"></div><div class="sw" style="left:18.40px;top:28.1px;width:5.6px;height:3.4px;background:#4078b0"></div><div class="sw" style="left:25.45px;top:28.1px;width:5.6px;height:3.4px;background:#b04030"></div><div class="sw" style="left:32.50px;top:28.1px;width:5.6px;height:3.4px;background:#e07030"></div><div class="sw" style="left:39.55px;top:28.1px;width:5.6px;height:3.4px;background:#e8b030"></div></div>
<div class="th" style="left:599.8px;top:249.7px;width:63px;height:35.6px;background:linear-gradient(160deg,#f0f0f0,#fafafa 45%,#e2e2e2);"><div class="aa" style="left:5.10px;top:6.59px;color:#111;font-size:14.43px;transform:scaleX(1.006);font-family:'Liberation Sans',sans-serif;font-weight:bold;">Aa</div><div class="sw" style="left:4.50px;top:28.1px;width:5.6px;height:3.4px;background:#38a0e0"></div><div class="sw" style="left:11.55px;top:28.1px;width:5.6px;height:3.4px;background:#40b8b0"></div><div class="sw" style="left:18.60px;top:28.1px;width:5.6px;height:3.4px;background:#60c060"></div><div class="sw" style="left:25.65px;top:28.1px;width:5.6px;height:3.4px;background:#e0a040"></div><div class="sw" style="left:32.70px;top:28.1px;width:5.6px;height:3.4px;background:#e07030"></div><div class="sw" style="left:39.75px;top:28.1px;width:5.6px;height:3.4px;background:#a070e0"></div><div class="bd" style="box-shadow:inset 0 0 0 1px #dadada"></div></div>
<div class="th" style="left:671.1px;top:249.7px;width:63px;height:35.6px;background:#fff;"><div class="a" style="left:0;top:0;width:63px;height:36px;background:linear-gradient(90deg,#fff 0,#f4f4f4 88%,#3a2a20 92%,#2a1a10 100%)"></div><div class="a" style="left:2px;top:1.5px;width:56px;height:2px;background:#c41818;transform:skewY(-2deg)"></div><div class="a" style="left:0;top:24px;width:59px;height:8px;background:linear-gradient(#c82020,#8a1010);transform:skewY(-5deg)"></div><div class="aa" style="left:5.10px;top:3.57px;color:#c41818;font-size:17.29px;transform:scaleX(0.745);font-family:'Liberation Sans',sans-serif;font-weight:bold;-webkit-text-stroke:0.4px #c41818;">Aa</div><div class="sw" style="left:11.40px;top:28.1px;width:5.6px;height:3.4px;background:#b06060"></div><div class="sw" style="left:18.45px;top:28.1px;width:5.6px;height:3.4px;background:#a8a890"></div><div class="sw" style="left:25.50px;top:28.1px;width:5.6px;height:3.4px;background:#90a8a8"></div><div class="sw" style="left:32.55px;top:28.1px;width:5.6px;height:3.4px;background:#9090b0"></div><div class="sw" style="left:39.60px;top:28.1px;width:5.6px;height:3.4px;background:#a0a0a0"></div><div class="bd" style="box-shadow:inset 0 0 0 1px #dcdcdc"></div></div>
<div class="th" style="left:315.7px;top:293.3px;width:63px;height:35.6px;background:radial-gradient(ellipse at 60% 55%,#2e7a74,#1e545a 55%,#163c46);"><div class="aa" style="left:4.60px;top:4.41px;color:#fff;font-size:16.29px;transform:scaleX(1.130);font-family:'Liberation Sans',sans-serif;font-weight:normal;-webkit-text-stroke:0.15px #fff;">Aa</div><div class="sw" style="left:3.90px;top:28px;width:5.6px;height:3.4px;background:#e02020"></div><div class="sw" style="left:10.95px;top:28px;width:5.6px;height:3.4px;background:#e08030"></div><div class="sw" style="left:18.00px;top:28px;width:5.6px;height:3.4px;background:#e0c050"></div><div class="sw" style="left:25.05px;top:28px;width:5.6px;height:3.4px;background:#80b8a0"></div><div class="sw" style="left:32.10px;top:28px;width:5.6px;height:3.4px;background:#6090b8"></div><div class="sw" style="left:39.15px;top:28px;width:5.6px;height:3.4px;background:#c070c0"></div></div>
<div class="a" style="left:369.5px;top:292px;width:4px;height:6.5px;border-radius:1.5px;background:#e01e2e"></div>
<div class="th" style="left:386.6px;top:293.3px;width:63px;height:35.6px;background:radial-gradient(ellipse at 50% 30%,#4a4c50,#2c2e32 55%,#1e2024);"><div class="aa" style="left:4.90px;top:4.41px;color:#fff;font-size:16.29px;transform:scaleX(1.130);font-family:'Liberation Sans',sans-serif;font-weight:normal;-webkit-text-stroke:0.15px #fff;">Aa</div><div class="sw" style="left:4.40px;top:28px;width:5.6px;height:3.4px;background:#8c8c8c"></div><div class="sw" style="left:11.45px;top:28px;width:5.6px;height:3.4px;background:#e8e0c0"></div><div class="sw" style="left:18.50px;top:28px;width:5.6px;height:3.4px;background:#f0e090"></div><div class="sw" style="left:25.55px;top:28px;width:5.6px;height:3.4px;background:#f0d070"></div><div class="sw" style="left:32.60px;top:28px;width:5.6px;height:3.4px;background:#e8b050"></div><div class="sw" style="left:39.65px;top:28px;width:5.6px;height:3.4px;background:#e89050"></div><div class="bd" style="box-shadow:inset 0 0 0 1px #c0c0c0"></div></div>
<div class="th" style="left:457.9px;top:293.3px;width:63px;height:35.6px;background:#fff;"><div class="a" style="left:0;top:0;width:2.5px;height:36px;background:#80c040"></div><svg style="left:43px;top:0" width="20" height="36" viewBox="0 0 20 36"><path d="M6 0 H20 V36 H0 L10 18 Z" fill="#62ac2c"/><path d="M13 0 H20 V36 H9 L16 18 Z" fill="#94cc4c"/></svg><div class="aa" style="left:4.40px;top:4.41px;color:#7cbc34;font-size:16.29px;transform:scaleX(0.926);font-family:'Liberation Sans',sans-serif;font-weight:normal;-webkit-text-stroke:0.2px #7cbc34;">Aa</div><div class="sw" style="left:4.00px;top:28px;width:5.6px;height:3.4px;background:#80b830"></div><div class="sw" style="left:11.05px;top:28px;width:5.6px;height:3.4px;background:#48a030"></div><div class="sw" style="left:18.10px;top:28px;width:5.6px;height:3.4px;background:#e8b830"></div><div class="sw" style="left:25.15px;top:28px;width:5.6px;height:3.4px;background:#e07028"></div><div class="sw" style="left:32.20px;top:28px;width:5.6px;height:3.4px;background:#d03020"></div><div class="sw" style="left:39.25px;top:28px;width:5.6px;height:3.4px;background:#a08860"></div><div class="bd" style="box-shadow:inset 0 0 0 1px #e6e6e6"></div></div>
<div class="th" style="left:528.6px;top:293.3px;width:63px;height:35.6px;background:#050505;"><svg style="left:0;top:0" width="63" height="36" viewBox="0 0 63 36"><path d="M0 0 H34 C22 2 10 5 0 9 Z" fill="#e04010"/><path d="M0 0 H14 C9 2 4 3 0 5 Z" fill="#f08a20"/><path d="M0 36 V30 C22 34 42 29 63 23 V36 Z" fill="#1a8ad0"/><path d="M0 36 V33 C25 36 45 33 63 29 V36 Z" fill="#28c0ea"/><path d="M0 20 C3 25 6 31 11 36 H0 Z" fill="#c83010"/></svg><div class="aa" style="left:5.30px;top:4.41px;color:#fff;font-size:16.29px;transform:scaleX(1.130);font-family:'Liberation Sans',sans-serif;font-weight:normal;-webkit-text-stroke:0.15px #fff;">Aa</div><div class="sw" style="left:4.40px;top:28px;width:5.6px;height:3.4px;background:#e04030"></div><div class="sw" style="left:11.45px;top:28px;width:5.6px;height:3.4px;background:#e88040"></div><div class="sw" style="left:18.50px;top:28px;width:5.6px;height:3.4px;background:#f0c050"></div><div class="sw" style="left:25.55px;top:28px;width:5.6px;height:3.4px;background:#a8c050"></div><div class="sw" style="left:32.60px;top:28px;width:5.6px;height:3.4px;background:#40b0a0"></div><div class="sw" style="left:39.65px;top:28px;width:5.6px;height:3.4px;background:#3090d0"></div></div>
<div class="th" style="left:599.8px;top:293.3px;width:63px;height:35.6px;background:radial-gradient(ellipse at 55% 40%,#fbfbf5,#f0f1e0 60%,#e2e6cc);"><div class="aa" style="left:5.10px;top:4.41px;color:#1a1a1a;font-size:16.29px;transform:scaleX(1.130);font-family:'Liberation Sans',sans-serif;font-weight:normal;-webkit-text-stroke:0.1px #1a1a1a;">Aa</div><div class="a" style="left:0.5px;top:22.7px;width:8.5px;height:4px;border-radius:2px;background:#b83818"></div><div class="a" style="left:4px;top:28px;width:5px;height:3.5px;background:#a83018"></div><div class="a" style="left:4.2px;top:26px;width:1.2px;height:9px;background:#b83818"></div><div class="sw" style="left:4.50px;top:28px;width:5.6px;height:3.4px;background:#a83818"></div><div class="sw" style="left:11.55px;top:28px;width:5.6px;height:3.4px;background:#e08830"></div><div class="sw" style="left:18.60px;top:28px;width:5.6px;height:3.4px;background:#c8a060"></div><div class="sw" style="left:25.65px;top:28px;width:5.6px;height:3.4px;background:#90a060"></div><div class="sw" style="left:32.70px;top:28px;width:5.6px;height:3.4px;background:#98b060"></div><div class="sw" style="left:39.75px;top:28px;width:5.6px;height:3.4px;background:#80b0a8"></div><div class="bd" style="box-shadow:inset 0 0 0 1px #e2e2e2"></div></div>
<div class="th" style="left:671.1px;top:293.3px;width:63px;height:35.6px;background:#fff;"><div class="a" style="left:0;top:0;width:63px;height:24px;background-color:#2f8fc8;background-image:radial-gradient(circle,#bfe2f4 1.5px,transparent 1.7px),radial-gradient(circle,#1a6aa8 1.3px,transparent 1.5px);background-size:6px 6px,6px 6px;background-position:1px 1px,4px 4px"></div><div class="aa" style="left:4.90px;top:5.40px;color:#111;font-size:15.71px;transform:scaleX(0.752);font-family:'Liberation Sans',sans-serif;font-weight:bold;-webkit-text-stroke:0.2px #111;">Aa</div><div class="sw" style="left:4.40px;top:28px;width:5.6px;height:3.4px;background:#30a8e0"></div><div class="sw" style="left:11.45px;top:28px;width:5.6px;height:3.4px;background:#2080d0"></div><div class="sw" style="left:18.50px;top:28px;width:5.6px;height:3.4px;background:#30c0d0"></div><div class="sw" style="left:25.55px;top:28px;width:5.6px;height:3.4px;background:#40b8a0"></div><div class="sw" style="left:32.60px;top:28px;width:5.6px;height:3.4px;background:#309060"></div><div class="sw" style="left:39.65px;top:28px;width:5.6px;height:3.4px;background:#70b0a0"></div><div class="bd" style="box-shadow:inset 0 0 0 1px #e2e2e2"></div></div>
<div class="a" style="left:315.7px;top:336.7px;width:63px;height:14.2px;overflow:hidden;background:#f5b020"><div class="a" style="left:18px;top:3px;width:24px;height:24px;border-radius:50%;background:#fff"></div><div class="aa" style="left:3.80px;top:4.79px;color:#111;font-size:17.14px;transform:scaleX(0.713);font-family:'Liberation Sans',sans-serif;font-weight:bold;-webkit-text-stroke:0.2px #111;">Aa</div></div>
</body></html>
